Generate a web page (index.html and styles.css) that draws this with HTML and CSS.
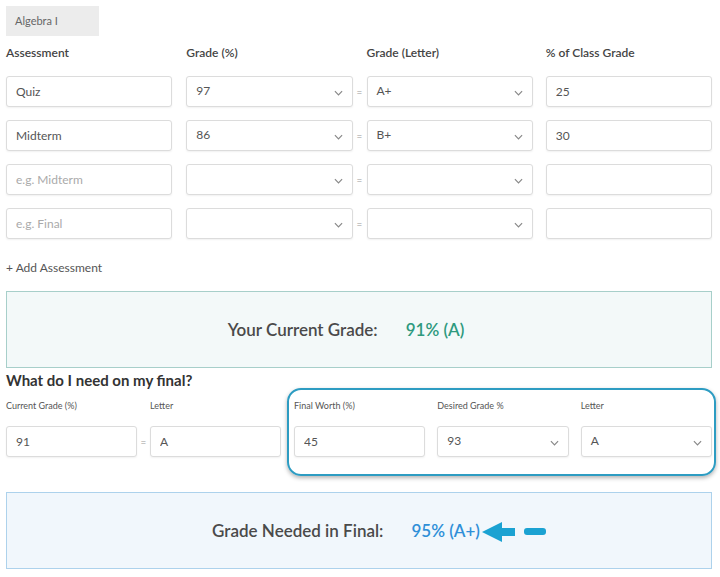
FILE: index.html
```html
<!DOCTYPE html>
<html lang="en">
<head>
    <meta charset="UTF-8">
    <meta name="viewport" content="width=device-width, initial-scale=1.0">
    <title>Grade Calculator</title>
    <link rel="stylesheet" href="styles.css">
</head>
<body>
    <div class="container">
        <div class="tab">Algebra I</div>

        <div class="grade-grid">
            <div class="col-head">Assessment</div>
            <div></div>
            <div class="col-head">Grade (%)</div>
            <div></div>
            <div class="col-head">Grade (Letter)</div>
            <div></div>
            <div class="col-head">% of Class Grade</div>

            <input class="field" type="text" value="Quiz">
            <div></div>
            <div class="field select"><span>97</span><svg class="chev" viewBox="0 0 10 6"><path d="M1 1l4 4 4-4"/></svg></div>
            <div class="eq">=</div>
            <div class="field select"><span>A+</span><svg class="chev" viewBox="0 0 10 6"><path d="M1 1l4 4 4-4"/></svg></div>
            <div></div>
            <input class="field" type="text" value="25">

            <input class="field" type="text" value="Midterm">
            <div></div>
            <div class="field select"><span>86</span><svg class="chev" viewBox="0 0 10 6"><path d="M1 1l4 4 4-4"/></svg></div>
            <div class="eq">=</div>
            <div class="field select"><span>B+</span><svg class="chev" viewBox="0 0 10 6"><path d="M1 1l4 4 4-4"/></svg></div>
            <div></div>
            <input class="field" type="text" value="30">

            <input class="field" type="text" placeholder="e.g. Midterm">
            <div></div>
            <div class="field select"><span></span><svg class="chev" viewBox="0 0 10 6"><path d="M1 1l4 4 4-4"/></svg></div>
            <div class="eq">=</div>
            <div class="field select"><span></span><svg class="chev" viewBox="0 0 10 6"><path d="M1 1l4 4 4-4"/></svg></div>
            <div></div>
            <input class="field" type="text">

            <input class="field" type="text" placeholder="e.g. Final">
            <div></div>
            <div class="field select"><span></span><svg class="chev" viewBox="0 0 10 6"><path d="M1 1l4 4 4-4"/></svg></div>
            <div class="eq">=</div>
            <div class="field select"><span></span><svg class="chev" viewBox="0 0 10 6"><path d="M1 1l4 4 4-4"/></svg></div>
            <div></div>
            <input class="field" type="text">
        </div>

        <div class="add-link">+ Add Assessment</div>

        <div class="result result-current">
            <span class="result-label">Your Current Grade:</span>
            <span class="result-value">91% (A)</span>
        </div>

        <h2>What do I need on my final?</h2>

        <div class="final-row">
            <div class="final-left">
                <div class="small-label">Current Grade (%)</div>
                <div></div>
                <div class="small-label">Letter</div>
                <input class="field" type="text" value="91">
                <div class="eq">=</div>
                <input class="field" type="text" value="A">
            </div>
            <div class="final-right">
                <div class="small-label">Final Worth (%)</div>
                <div class="small-label">Desired Grade %</div>
                <div class="small-label">Letter</div>
                <input class="field" type="text" value="45">
                <div class="field select"><span>93</span><svg class="chev" viewBox="0 0 10 6"><path d="M1 1l4 4 4-4"/></svg></div>
                <div class="field select"><span>A</span><svg class="chev" viewBox="0 0 10 6"><path d="M1 1l4 4 4-4"/></svg></div>
            </div>
        </div>

        <div class="result result-needed">
            <span class="result-label">Grade Needed in Final:</span>
            <span class="result-value">95% (A+)
                <svg class="arrow" viewBox="0 0 66 22">
                    <path d="M0 11L20 1v6h13v8H20v6z"/>
                    <rect x="42" y="7" width="22" height="7" rx="3"/>
                </svg>
            </span>
        </div>
    </div>
</body>
</html>
```

FILE: styles.css
```css
* {
    margin: 0;
    padding: 0;
    box-sizing: border-box;
    font-family: Lato, "Open Sans", sans-serif;
}

body {
    background: white;
    padding: 6px 8px 6px 6px;
}

.container {
    width: 706px;
}

.tab {
    width: 93px;
    height: 30px;
    line-height: 30px;
    padding-left: 9px;
    background: #ececec;
    color: #666;
    font-size: 11px;
}

.grade-grid {
    display: grid;
    grid-template-columns: 1fr 14px 1fr 14px 1fr 13px 1fr;
    row-gap: 13px;
    margin-top: 9px;
}

.col-head {
    font-size: 12px;
    color: #444;
    line-height: 16px;
    font-weight: 600;
    margin-bottom: 2px;
}

.field {
    height: 31px;
    border: 1px solid #dcdcdc;
    border-radius: 3px;
    box-shadow: 0 1px 2px rgba(0, 0, 0, 0.06);
    background: white;
    padding: 0 9px;
    font-size: 12px;
    color: #555;
    width: 100%;
    outline: none;
}

.field::placeholder {
    color: #aaa;
}

.select {
    display: flex;
    align-items: center;
    justify-content: space-between;
    padding-bottom: 3px;
}

.chev {
    width: 9px;
    height: 6px;
    margin-top: 5px;
    fill: none;
    stroke: #888;
    stroke-width: 1.3;
}

.eq {
    display: flex;
    align-items: center;
    justify-content: center;
    font-size: 10px;
    color: #999;
}

.add-link {
    margin-top: 21px;
    font-size: 12px;
    line-height: 16px;
    color: #555;
}

.result {
    height: 77px;
    display: flex;
    align-items: center;
    justify-content: center;
    gap: 28px;
    padding-right: 26px;
    font-size: 17px;
}

.result-label {
    color: #4a4a4a;
    font-weight: 600;
}

.result-current {
    margin-top: 15px;
    background: #f3f9f9;
    border: 1px solid #a7cfca;
}

.result-current .result-value {
    color: #2e9a7e;
    font-weight: 600;
}

h2 {
    font-size: 15px;
    line-height: 18px;
    color: #333;
    font-weight: bold;
    margin-top: 3px;
}

.final-row {
    display: flex;
    margin-top: 10px;
    gap: 13px;
}

.final-left {
    display: grid;
    grid-template-columns: 131px 13px 131px;
    row-gap: 13px;
}

.final-right {
    position: relative;
    flex: 1;
    display: grid;
    grid-template-columns: 1fr 1fr 1fr;
    column-gap: 12px;
    row-gap: 13px;
}

.final-right::before {
    content: "";
    position: absolute;
    top: -11px;
    bottom: -19px;
    left: -7px;
    right: -4px;
    border: 2px solid #2d9cc2;
    border-radius: 14px;
    box-shadow: 0 2px 4px rgba(0, 0, 0, 0.3);
    pointer-events: none;
}

.small-label {
    font-size: 9px;
    line-height: 14px;
    color: #555;
}

.result-needed {
    margin-top: 35px;
    background: #f1f7fc;
    border: 1px solid #add2ec;
}

.result-needed .result-value {
    position: relative;
    color: #2f8fd8;
    font-weight: 600;
}

.arrow {
    position: absolute;
    left: 100%;
    top: 50%;
    width: 66px;
    height: 22px;
    margin-left: 2px;
    margin-top: -10px;
    fill: #1ba2d2;
}
```
